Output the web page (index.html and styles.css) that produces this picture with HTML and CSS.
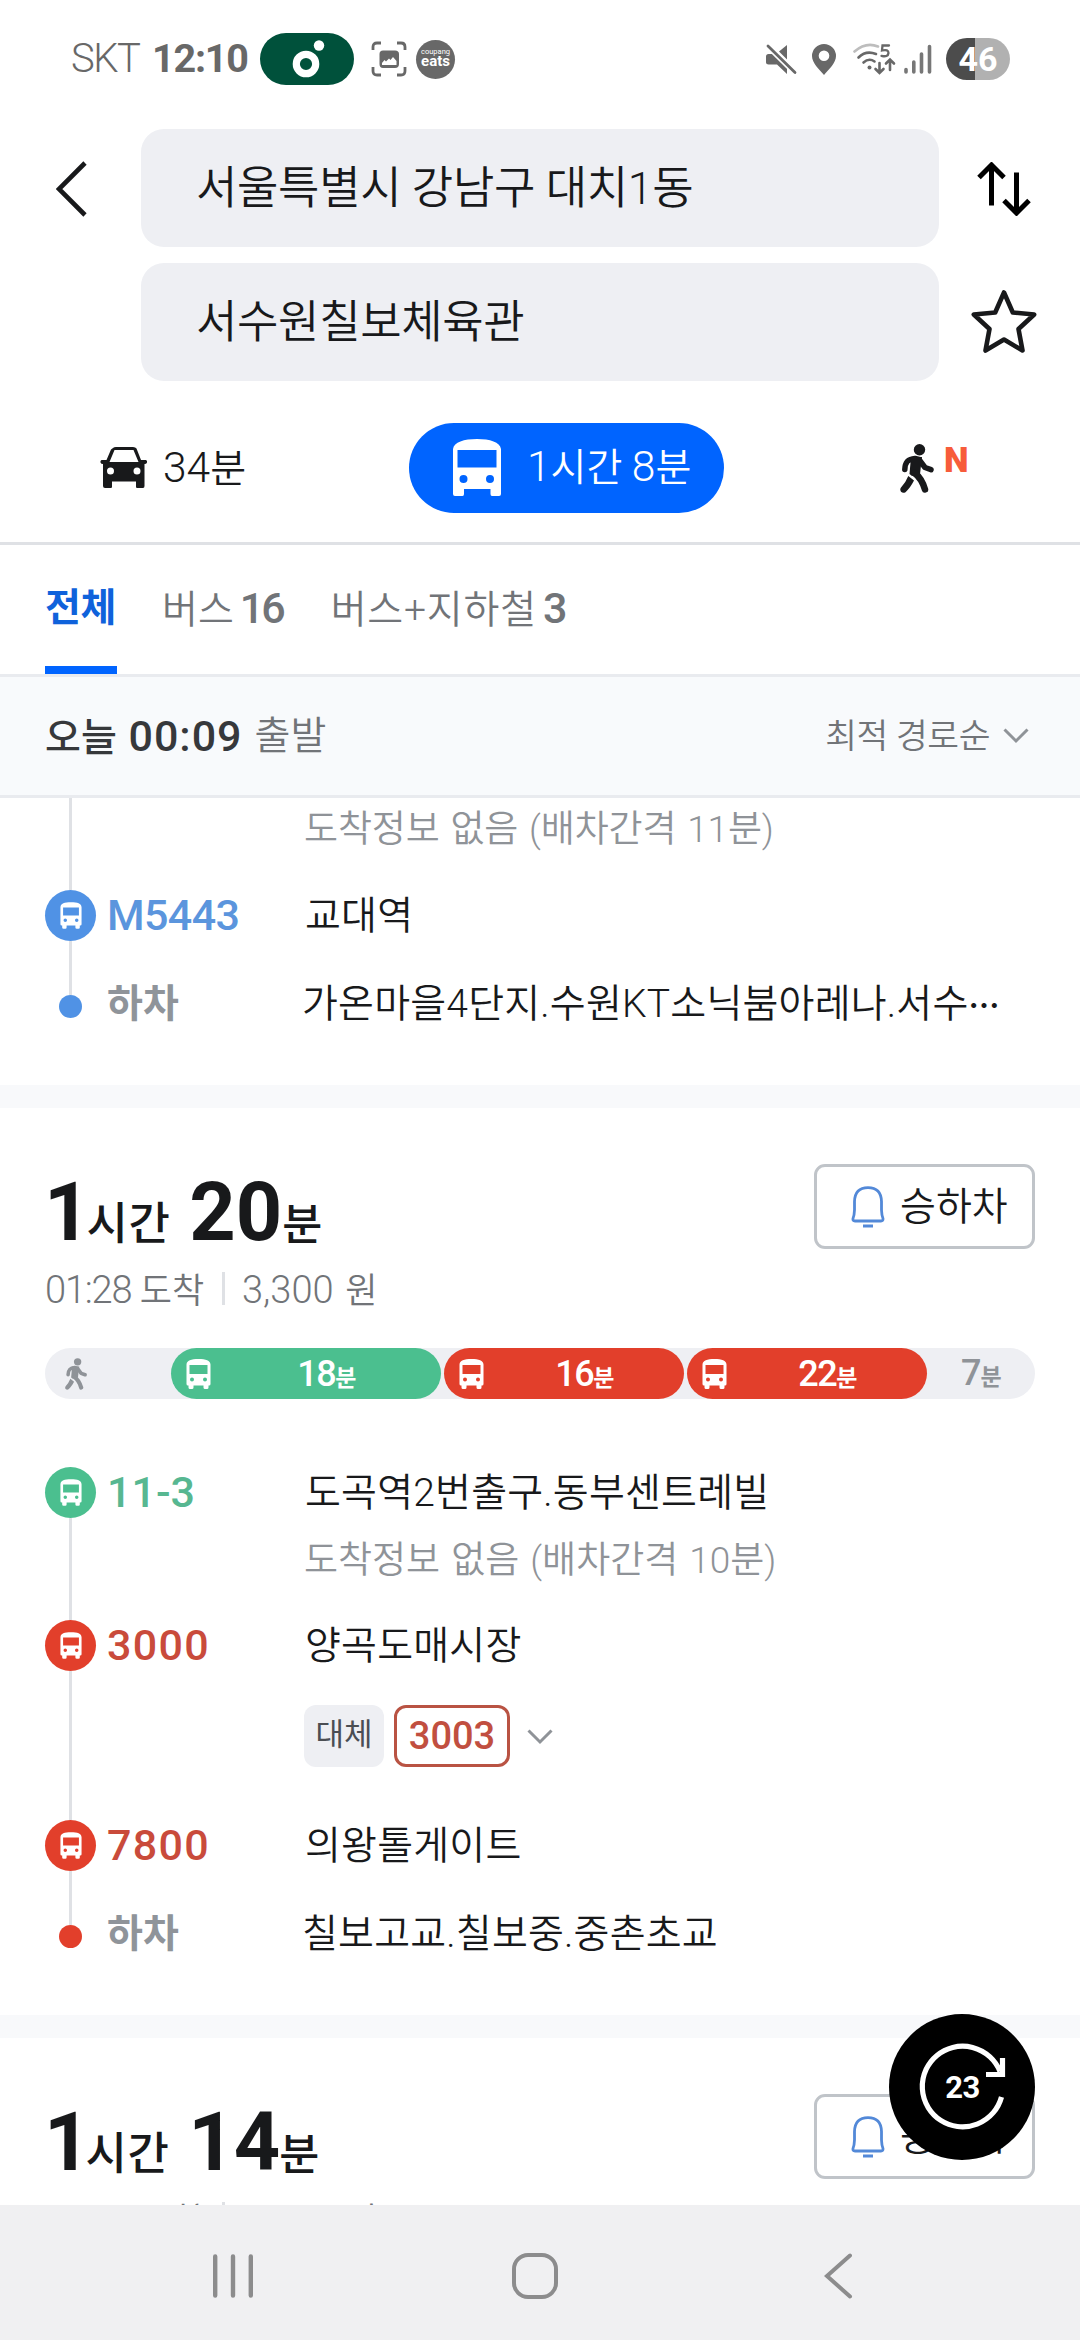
FILE: index.html
```
<!DOCTYPE html>
<html lang="ko">
<head>
<meta charset="utf-8">
<title>길찾기</title>
<link rel="stylesheet" href="styles.css">
</head>
<body>
<svg class="defs" aria-hidden="true">
  <symbol id="bus" viewBox="0 0 25 30">
    <path fill-rule="evenodd" d="M.5 5.500C.8 1.500 5 0 12.500 0S24.200 1.500 24.500 5.500V25q0 1.500-1.500 1.500h-.5V28.500q0 1.500-1.500 1.500h-2q-1.500 0-1.500-1.500V26.500H7.500V28.500Q7.500 30 6 30H4Q2.500 30 2.500 28.500V26.500H2Q.5 26.500.5 25ZM3.500 6V15H21.500V6ZM6 18.500a2 2 0 1 0 0 4a2 2 0 1 0 0-4ZM19 18.500a2 2 0 1 0 0 4a2 2 0 1 0 0-4Z"/>
  </symbol>
  <symbol id="walk" viewBox="0 0 34 49">
    <circle cx="19.500" cy="5.700" r="5.700"/>
    <path d="M4.800 25.500C5 18 8 15 15 14.500L19 15.500L25 23.500L31 25.700" fill="none" stroke="currentColor" stroke-width="5.500" stroke-linecap="round" stroke-linejoin="round"/>
    <path d="M11 13L22 13L20 30L12 32L9.500 30Z"/>
    <path d="M14.500 29C20 33 22.500 37 25 45.500" fill="none" stroke="currentColor" stroke-width="6.500" stroke-linecap="round"/>
    <path d="M8.300 32L14 36.500C11 42 9 45 5.500 48.200Q3 49.500 1 47.800Q-.500 45.500 1 43.500Q6 38 8.300 32Z"/>
  </symbol>
  <symbol id="bell" viewBox="0 0 34 42">
    <path d="M3.500 15.500Q4 1.700 17 1.700T30.500 15.500V24Q30.700 29.500 32 32.500Q32.300 35 30 35H4Q1.500 35 2 32.500Q3.300 29.500 3.500 24Z" fill="none" stroke="currentColor" stroke-width="2.800"/>
    <path d="M12 38.500H22V41.500H12Z"/>
  </symbol>
  <symbol id="chev" viewBox="0 0 26 16">
    <path d="M1.500 1.500L13 13L24.500 1.500" fill="none" stroke="currentColor" stroke-width="3"/>
  </symbol>
</svg>

<header class="status">
  <span class="carrier">SKT</span>
  <span class="clock">12:10</span>
  <span class="melon"><svg width="33" height="38" viewBox="0 0 33 38"><circle cx="14" cy="24" r="9.700" fill="none" stroke="#fff" stroke-width="7.200"/><circle cx="27" cy="5.500" r="5.200" fill="#fff"/></svg></span>
  <svg class="capture" width="36" height="36" viewBox="0 0 36 36"><path d="M2 9V6Q2 2 6 2H10M26 2H30Q34 2 34 6V9M34 26V30Q34 34 30 34H26M10 34H6Q2 34 2 30V26" fill="none" stroke="#686868" stroke-width="2.800"/><path fill-rule="evenodd" d="M12 9.500H24Q28 9.500 28 13V23Q28 27 24 27H12Q8.500 27 8.500 23V13Q8.500 9.500 12 9.500ZM11 24H25.500V20L22 16L19.500 19L18 17.500L15 20.500L13.500 19L11 22Z" fill="#686868"/></svg>
  <span class="eats"><small>coupang</small><b>eats</b></span>
  <span class="status-right">
    <svg width="31" height="31" viewBox="0 0 31 31"><path fill="#686868" d="M2.500 10H8L21 24V30L11 20.500H2.500Q0 20.500 0 18.500V12.500Q0 10 2.500 10ZM13 7.500L21 1V15.500Z"/><path d="M2 2L29 28.500" stroke="#fff" stroke-width="6"/><path d="M2 2L29 28.500" stroke="#686868" stroke-width="2.800" stroke-linecap="round"/></svg>
    <svg width="24" height="31" viewBox="0 0 24 31"><path fill="#686868" fill-rule="evenodd" d="M12 0A12 12 0 0 1 24 12C24 19 17 25 12 31C7 25 0 19 0 12A12 12 0 0 1 12 0ZM12 6.500A5.300 5.300 0 1 0 12 17.100A5.300 5.300 0 1 0 12 6.500Z"/></svg>
    <svg width="43" height="32" viewBox="0 0 43 32" fill="none" stroke="#686868" stroke-width="2.600" stroke-linecap="round"><path d="M1.500 8.500Q13 -1.500 25 3.500" stroke="#bdbdbd"/><path d="M5.500 14.500Q13 7 23 11M10.500 19.500Q16 14.500 21.500 18.500"/><circle cx="16.500" cy="24.500" r="2" fill="#686868" stroke="none"/><path d="M26.500 20V29M22.500 26L26.500 30L30.500 26M37 27V17M33 20.500L37 16.500L41 20.500"/><path d="M36 2.500H29.500L29 7.500Q35.500 6 35.500 10Q35 14.500 28.500 12.800" stroke-width="2.300"/></svg>
    <svg width="28" height="30" viewBox="0 0 28 30" stroke="#777" stroke-width="3.600" stroke-linecap="round"><path d="M2 25.500V28M9.800 18V28M17.500 10V28M25.500 2.500V28"/></svg>
    <span class="battery">46</span>
  </span>
</header>

<section class="search">
  <svg class="back" width="32" height="56" viewBox="0 0 32 56"><path d="M29 2L3 28L29 54" fill="none" stroke="#18191b" stroke-width="4.600"/></svg>
  <div class="field">서울특별시 강남구 대치1동</div>
  <svg class="swap" width="54" height="54" viewBox="0 0 54 54" fill="none" stroke="#000" stroke-width="5"><path d="M14.500 43.500V4M2 15.500L14.500 3L27 15.500M39.500 10.500V50M27 38.500L39.500 51L52 38.500"/></svg>
  <div class="field to">서수원칠보체육관</div>
  <svg class="star" width="68" height="66" viewBox="0 0 68 66"><path d="M34 4.500L42.800 24.500L64.200 26.500L48.500 41L52.500 62.500L34 51.500L15.500 62.500L19.500 41L3.800 26.500L25.200 24.500Z" fill="none" stroke="#18191b" stroke-width="4.600" stroke-linejoin="round"/></svg>
</section>

<nav class="modes">
  <div class="mode car">
    <svg width="48" height="42" viewBox="0 0 48 42"><path fill="#18191b" fill-rule="evenodd" d="M13 1Q14 0 16 0H33Q35.500 0 36.500 1.500L41 13H46Q47.500 13.500 47 15.500Q46.500 17 44.500 17V39Q44.500 41 43 41H37Q36 41 36 39.500V34.500H12V39.500Q12 41 11 41H5Q3 41 3 39V17Q1 17 .5 15.500Q0 13.500 1.500 13H6.500L11 2.500ZM14.500 3L9.500 15H38.500L33.500 3ZM10.500 20.500A3.500 3.500 0 1 0 10.500 27.500A3.500 3.500 0 1 0 10.500 20.500ZM37 20.500A3.500 3.500 0 1 0 37 27.500A3.500 3.500 0 1 0 37 20.500Z"/></svg>
    <span class="mode-time"><i>34</i>분</span>
  </div>
  <div class="mode bus">
    <svg width="48" height="57" viewBox="0 0 48 57"><path fill="#fff" fill-rule="evenodd" d="M0 10C1 3 11 0 24 0S47 3 48 10V55Q48 57 46 57H39Q37.500 57 37.500 55V50H11V55Q11 57 9.500 57H2Q0 57 0 55ZM4.500 11V28.500H43.500V11ZM10.500 36A4 4 0 1 0 10.500 44A4 4 0 1 0 10.500 36ZM37 36A4 4 0 1 0 37 44A4 4 0 1 0 37 36Z"/></svg>
    <span class="mode-time"><i>1</i>시간 <i>8</i>분</span>
  </div>
  <div class="mode foot">
    <svg width="34" height="49"><use href="#walk"/></svg>
    <b class="new">N</b>
  </div>
</nav>

<nav class="tabs">
  <div class="tab active">전체</div>
  <div class="tab t2">버스<b>16</b></div>
  <div class="tab t3">버스+지하철<b>3</b></div>
</nav>

<section class="depart">
  <b>오늘 <i>00:09</i></b><span class="go">출발</span>
  <span class="sort">최적 경로순</span><svg width="26" height="16"><use href="#chev"/></svg>
</section>

<main class="results">
  <article class="card blue">
    <div class="leg info first-visible"><div class="rail"></div><span class="sub">도착정보 없음 (배차간격 11분)</span></div>
    <div class="leg"><div class="rail"><span class="disc"><svg width="22" height="27"><use href="#bus"/></svg></span></div><span class="route">M5443</span><span class="stop">교대역</span></div>
    <div class="leg end"><div class="rail"><span class="dot"></span></div><span class="off">하차</span><span class="stop">가온마을4단지.수원KT소닉붐아레나.서수<em>⋯</em></span></div>
  </article>

  <article class="card">
    <div class="head">
      <h2><b>1</b><span class="h">시간</span><b>20</b><span class="m">분</span></h2>
      <div class="alarm"><svg width="34" height="42"><use href="#bell"/></svg><span>승하차</span></div>
    </div>
    <div class="meta"><span class="arrive"><i>01:28</i> 도착</span><span class="fare"><i>3,300</i> 원</span></div>
    <div class="bar">
      <div class="walk"><svg width="22" height="32"><use href="#walk"/></svg></div>
      <div class="seg green" style="width:270px"><svg width="25" height="30"><use href="#bus"/></svg><span>18<small>분</small></span></div>
      <div class="seg red" style="width:240px"><svg width="25" height="30"><use href="#bus"/></svg><span>16<small>분</small></span></div>
      <div class="seg red" style="width:240px"><svg width="25" height="30"><use href="#bus"/></svg><span>22<small>분</small></span></div>
      <div class="rest">7<small>분</small></div>
    </div>
    <div class="leg start green"><div class="rail"><span class="disc"><svg width="22" height="27"><use href="#bus"/></svg></span></div><span class="route">11-3</span><span class="stop">도곡역2번출구.동부센트레빌</span></div>
    <div class="leg info"><div class="rail"></div><span class="sub">도착정보 없음 (배차간격 10분)</span></div>
    <div class="leg red"><div class="rail"><span class="disc"><svg width="22" height="27"><use href="#bus"/></svg></span></div><span class="route">3000</span><span class="stop">양곡도매시장</span></div>
    <div class="leg alt"><div class="rail"></div><span class="tag">대체</span><span class="num">3003</span><svg width="26" height="16"><use href="#chev"/></svg></div>
    <div class="leg red"><div class="rail"><span class="disc"><svg width="22" height="27"><use href="#bus"/></svg></span></div><span class="route">7800</span><span class="stop">의왕톨게이트</span></div>
    <div class="leg end red"><div class="rail"><span class="dot"></span></div><span class="off">하차</span><span class="stop">칠보고교.칠보중.중촌초교</span></div>
  </article>

  <article class="card next">
    <div class="head">
      <h2><b>1</b><span class="h">시간</span><b>14</b><span class="m">분</span></h2>
      <div class="alarm"><svg width="34" height="42"><use href="#bell"/></svg><span>승하차</span></div>
    </div>
    <div class="meta"><span class="arrive"><i>01:21</i> 도착</span><span class="fare"><i>3,300</i> 원</span></div>
  </article>

  <div class="refresh">
    <svg width="146" height="146" viewBox="0 0 146 146" fill="none" stroke="#fff" stroke-width="5.200"><path d="M112.500 83A40.300 40.300 0 1 1 111 57.500M113.500 44V60.500H97"/></svg>
    <span>23</span>
  </div>
</main>

<footer class="sysnav">
  <svg width="40" height="44" viewBox="0 0 40 44" stroke="#8c8c8d" stroke-width="4.400" stroke-linecap="round"><path d="M2.200 2.500V41.500M20 2.500V41.500M37.800 2.500V41.500"/></svg>
  <svg width="46" height="46" viewBox="0 0 46 46"><rect x="2" y="2" width="42" height="42" rx="14" fill="none" stroke="#8c8c8d" stroke-width="4"/></svg>
  <svg width="29" height="46" viewBox="0 0 29 46"><path d="M26 2.500L3 23L26 43.500" fill="none" stroke="#8c8c8d" stroke-width="4" stroke-linecap="round"/></svg>
</footer>
</body>
</html>
```
FILE: styles.css
```
* { box-sizing: border-box; }
html, body { margin: 0; padding: 0; }
body {
  width: 1080px;
  height: 2340px;
  overflow: hidden;
  display: flex;
  flex-direction: column;
  background: #fff;
  color: #18191b;
  fill: currentColor;
  font-family: Roboto, "Noto Sans CJK KR", sans-serif;
  font-weight: 350;
  font-size: 39px;
  line-height: 1;
  white-space: nowrap;
}
svg { display: block; flex: none; }
i, em { font-style: normal; }
.defs { position: absolute; width: 0; height: 0; }

/* status bar */
.status { height: 129px; padding: 0 70px 11px 71px; display: flex; align-items: center; color: #686868; }
.carrier { font-size: 40px; width: 81px; letter-spacing: -1.500px; font-weight: 350; }
.clock { font-weight: 700; font-size: 39.500px; letter-spacing: -1.200px; width: 108px; }
.melon { width: 94px; height: 52px; border-radius: 26px; background: #00513b; display: flex; align-items: center; justify-content: center; padding: 0 0 1px 3px; }
.capture { margin-left: 17px; }
.eats { width: 39px; height: 39px; border-radius: 50%; background: #686868; color: #fff; margin-left: 9px; display: flex; flex-direction: column; align-items: center; justify-content: center; line-height: 1; padding-bottom: 2px; }
.eats small { font-size: 7.500px; font-weight: 400; line-height: 7px; }
.eats b { font-size: 15px; font-weight: 700; line-height: 13px; }
.status-right { margin-left: auto; display: flex; align-items: center; }
.status-right svg:nth-child(2) { margin-left: 15px; }
.status-right svg:nth-child(3) { margin-left: 17px; }
.status-right svg:nth-child(4) { margin-left: 8px; }
.battery { width: 64px; height: 42px; border-radius: 21px; margin-left: 14px; background: linear-gradient(90deg, #4c4c4c 29px, #b1b1b1 29px); color: #fff; font-weight: 700; font-size: 34px; line-height: 43px; text-align: center; }

/* search */
.search { display: grid; grid-template-columns: 141px 798px 141px; grid-template-rows: 118px 118px; row-gap: 16px; align-items: center; }
.field { grid-column: 2; height: 118px; border-radius: 23px; background: #eeeff3; padding-left: 55px; font-size: 45px; line-height: 120px; letter-spacing: -.35px; }
.back { margin: 2px 0 0 56px; }
.swap { margin-left: 38px; margin-top: 2px; grid-column: 3; }
.star { margin-left: 31px; margin-top: -2px; grid-column: 3; }

/* transport modes */
.modes { height: 164px; border-bottom: 3px solid #dfe1e5; display: flex; align-items: flex-start; padding-top: 42px; }
.mode { height: 90px; display: flex; align-items: center; }
.mode i { font-size: 42.500px; }
.car { width: 409px; padding-left: 100px; gap: 15px; }
.bus { width: 315px; padding: 0 0 1px 44px; border-radius: 45px; background: #0064ff; color: #fff; gap: 26px; }
.foot { padding-left: 176px; align-items: flex-start; }
.foot svg { margin-top: 21px; }
.new { margin: 20px 0 0 10px; color: #f75c3a; font-weight: 900; font-size: 35px; }

/* filter tabs */
.tabs { height: 132px; border-bottom: 3px solid #e9ebef; padding-left: 45px; display: flex; color: #717478; }
.tab { line-height: 126px; }
.tab b { font-weight: 500; font-size: 43px; letter-spacing: -3px; }
.active { width: 72px; color: #0f62db; font-weight: 700; letter-spacing: -.5px; border-bottom: 8px solid #0064ff; }
.t2 { margin-left: 45px; }
.t3 { margin-left: 48px; letter-spacing: .8px; }
.t2 b, .t3 b { margin-left: 6px; }

/* departure */
.depart { height: 121px; background: #f8fafc; border-bottom: 3px solid #e9ebef; padding: 0 51px 0 45px; display: flex; align-items: center; color: #717478; }
.depart b { font-weight: 500; color: #36383b; }
.depart i { font-size: 43px; letter-spacing: 1px; margin-left: 2px; }
.go { margin-left: 12px; }
.sort { margin-left: auto; font-size: 34.500px; letter-spacing: -.4px; margin-right: 13px; }
.depart svg { color: #8f9398; }

/* results */
.results { height: 1407px; overflow: hidden; position: relative; }
.card { padding: 0 45px; background: #fff; }
.card + .card { border-top: 23px solid #f8f9fb; }
.card + .card .head { margin-top: 56px; }
.head { display: flex; justify-content: space-between; height: 85px; }
h2 { margin: 0 0 0 -1px; font-weight: 500; display: flex; align-items: baseline; line-height: 98px; }
h2 b { font-weight: 700; font-size: 81px; }
h2 span { font-size: 45px; }
h2 .h { margin: 0 19px 0 -4px; letter-spacing: .5px; }
h2 .m { font-size: 43.500px; }
.next .h { margin-right: 19px; }
.next b { letter-spacing: -1px; }
.alarm { width: 221px; height: 85px; border: 3px solid #c0c4c9; border-radius: 11px; display: flex; align-items: center; padding-left: 34px; gap: 15px; }
.alarm svg { color: #5389d8; }
.alarm span { padding-top: 2px; }
.meta { height: 99px; padding-top: 23px; font-size: 35px; color: #717478; display: flex; }
.meta span { height: 33px; line-height: 36px; }
.meta i { font-size: 38px; }
.arrive { width: 180px; border-right: 3px solid #dfe1e5; }
.arrive i { letter-spacing: -1.200px; }
.fare { padding-left: 17px; word-spacing: 3px; }
.bar { height: 51px; border-radius: 26px; background: #eeeff3; display: flex; gap: 3px; }
.walk { width: 123px; padding: 10px 0 0 20px; color: #8f9398; }
.seg { height: 51px; border-radius: 26px; color: #fff; padding-left: 15px; display: flex; align-items: center; font-weight: 500; font-size: 36px; letter-spacing: -1.500px; }
.seg span { flex: 1; text-align: center; }
.bar small { font-size: 23px; font-weight: 700; }
.seg.green { background: #4bbf8f; }
.seg.red { background: #e23f2b; }
.rest { flex: 1; padding-left: 31px; line-height: 51px; font-weight: 500; font-size: 36px; letter-spacing: -1px; color: #8f9398; }

.leg { height: 101px; display: flex; align-items: center; }
.rail { align-self: stretch; width: 51px; margin-right: 11px; display: flex; flex-direction: column; align-items: center; }
.rail::before, .rail::after { content: ""; flex: 1; width: 3px; background: #dfe1e5; }
.start .rail::before, .end .rail::after { background: none; }
.start { margin-top: 43px; }
.disc { width: 51px; height: 51px; border-radius: 50%; background: var(--c); display: flex; align-items: center; justify-content: center; color: #fff; }
.dot { width: 23px; height: 23px; border-radius: 50%; background: var(--c); }
.route { width: 198px; font-weight: 500; font-size: 43px; color: var(--t); }
.blue { --c: #5092e5; --t: #5b95dd; }
.blue .route { letter-spacing: -.6px; }
.leg.green { --c: #4bbf8f; --t: #57b791; }
.leg.red { --c: #e23f2b; --t: #c94b3b; }
.red .route { letter-spacing: 1.300px; }
.stop { letter-spacing: .2px; padding-top: 2px; }
.stop em { font-weight: 700; font-size: 31px; }
.end { height: 81px; margin-bottom: 38px; }
.off { width: 195px; font-weight: 700; color: #8f949a; padding-bottom: 4px; }
.end .stop { padding: 0 0 4px; }
.info { height: 52px; align-items: flex-start; }
.sub { margin-left: 197px; font-size: 37px; line-height: 36px; color: #8f9398; word-spacing: 2px; }
.first-visible { height: 67px; }
.first-visible .sub { margin-top: 14px; letter-spacing: -.15px; }
.alt { height: 99px; align-items: flex-start; }
.tag { margin: 9px 0 0 197px; width: 80px; height: 62px; border-radius: 12px; background: #eeeff3; color: #4b4e53; font-size: 31px; font-weight: 400; text-align: center; line-height: 60px; }
.num { margin: 9px 0 0 10px; width: 116px; height: 62px; border: 3px solid #b95343; border-radius: 12px; color: #c14f40; font-size: 38px; font-weight: 500; text-align: center; line-height: 57px; }
.alt svg { margin: 33px 0 0 17px; color: #8f9398; }

.refresh { position: absolute; left: 889px; top: 1216px; width: 146px; height: 146px; border-radius: 50%; background: #000; color: #fff; }
.refresh span { position: absolute; left: 0; width: 147px; top: 58px; text-align: center; font-size: 31px; font-weight: 700; letter-spacing: -.5px; }

/* system navigation */
.sysnav { height: 135px; background: #f0f0f2; display: flex; align-items: center; padding-top: 7px; }
.sysnav svg:nth-child(1) { margin-left: 213px; }
.sysnav svg:nth-child(2) { margin-left: 259px; }
.sysnav svg:nth-child(3) { margin-left: 266px; }
```
